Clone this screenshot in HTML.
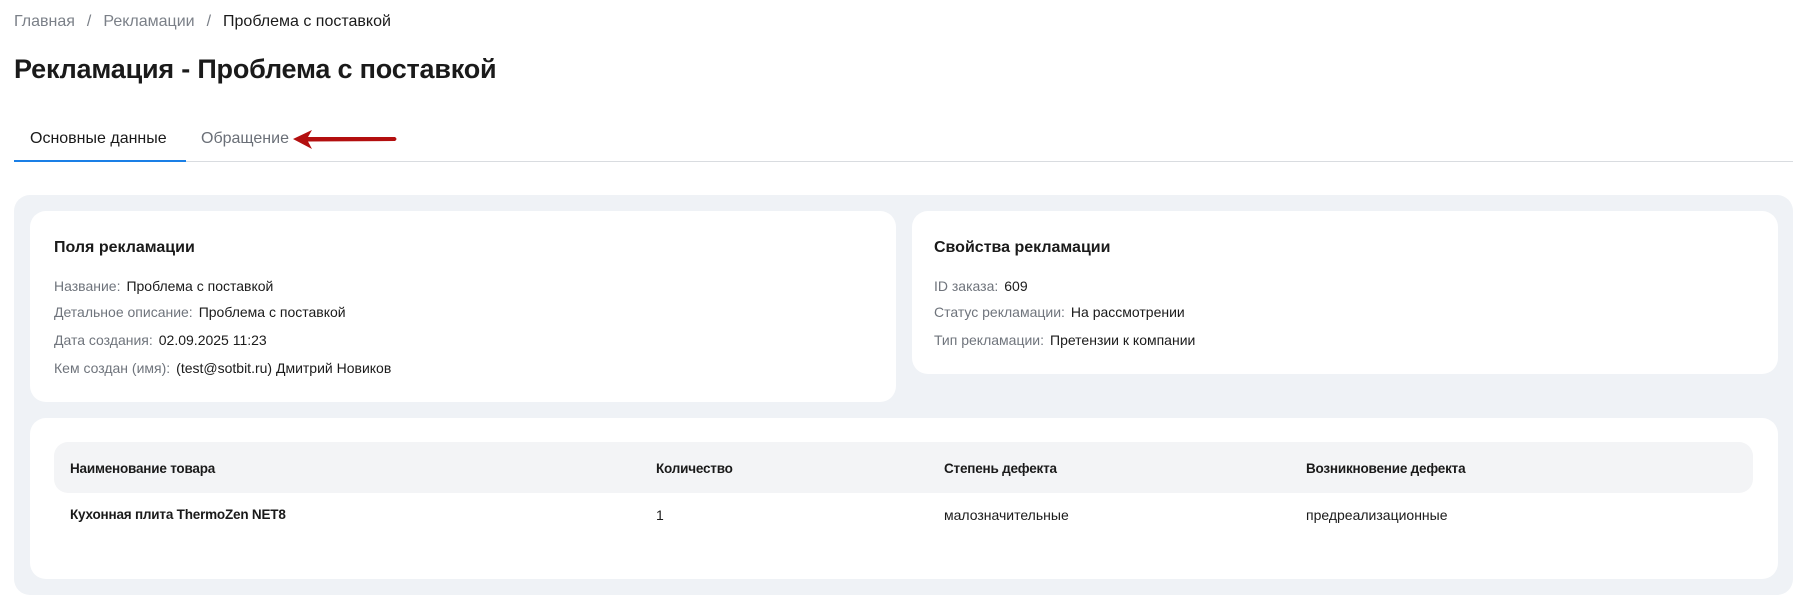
<!DOCTYPE html>
<html><head><meta charset="utf-8"><style>
*{margin:0;padding:0;box-sizing:border-box}
body{width:1806px;height:604px;background:#fff;font-family:"Liberation Sans",sans-serif;color:#1a1a1a;position:relative;overflow:hidden}
.a{position:absolute;white-space:nowrap}
.g{color:#7b8088}
.card{position:absolute;background:#fff;border-radius:16px}
.row{font-size:14px;line-height:16px}
.row span{color:#6f747c;margin-right:6px}
.th{font-size:13.5px;font-weight:bold;letter-spacing:-0.2px}
.td{font-size:14px}
</style></head><body>
<div class="a" style="left:14px;top:13px;font-size:16px;line-height:18px"><span class="g">Главная</span><span class="g" style="margin:0 12px">/</span><span class="g">Рекламации</span><span class="g" style="margin:0 12px">/</span><span>Проблема с поставкой</span></div>
<div class="a" style="left:14px;top:53px;font-size:27px;font-weight:bold;line-height:32px;letter-spacing:-0.2px">Рекламация - Проблема с поставкой</div>
<div class="a" style="left:30px;top:130px;font-size:16px;line-height:18px">Основные данные</div>
<div class="a g" style="left:201px;top:130px;font-size:16px;line-height:18px;color:#6a6f77">Обращение</div>
<svg class="a" style="left:290px;top:128px" width="110" height="24" viewBox="0 0 110 24"><path d="M3 11 L22 2 L18 9 L105 9 Q108 11 105 13 L18 13.5 L22 21 Z" fill="#b30f0f"/></svg>
<div class="a" style="left:14px;top:161px;width:1779px;height:1px;background:#d9dce0"></div>
<div class="a" style="left:14px;top:160px;width:172px;height:2px;background:#1a7fe6"></div>
<div class="a" style="left:14px;top:195px;width:1779px;height:400px;background:#eff2f6;border-radius:16px"></div>
<div class="card" style="left:30px;top:211px;width:866px;height:191px"></div>
<div class="card" style="left:912px;top:211px;width:866px;height:163px"></div>
<div class="card" style="left:30px;top:418px;width:1748px;height:161px"></div>
<div class="a" style="left:54px;top:239px;font-size:16px;font-weight:bold;line-height:18px">Поля рекламации</div>
<div class="a row" style="left:54px;top:278px"><span>Название:</span>Проблема с поставкой</div>
<div class="a row" style="left:54px;top:304px"><span>Детальное описание:</span>Проблема с поставкой</div>
<div class="a row" style="left:54px;top:332px"><span>Дата создания:</span>02.09.2025 11:23</div>
<div class="a row" style="left:54px;top:360px"><span>Кем создан (имя):</span>(test@sotbit.ru) Дмитрий Новиков</div>
<div class="a" style="left:934px;top:239px;font-size:16px;font-weight:bold;line-height:18px">Свойства рекламации</div>
<div class="a row" style="left:934px;top:278px"><span>ID заказа:</span>609</div>
<div class="a row" style="left:934px;top:304px"><span>Статус рекламации:</span>На рассмотрении</div>
<div class="a row" style="left:934px;top:332px"><span>Тип рекламации:</span>Претензии к компании</div>
<div class="a" style="left:54px;top:442px;width:1699px;height:51px;background:#f3f4f6;border-radius:14px"></div>
<div class="a th" style="left:70px;top:461px">Наименование товара</div>
<div class="a th" style="left:656px;top:461px">Количество</div>
<div class="a th" style="left:944px;top:461px">Степень дефекта</div>
<div class="a th" style="left:1306px;top:461px">Возникновение дефекта</div>
<div class="a th" style="left:70px;top:507px">Кухонная плита ThermoZen NET8</div>
<div class="a td" style="left:656px;top:507px">1</div>
<div class="a td" style="left:944px;top:507px">малозначительные</div>
<div class="a td" style="left:1306px;top:507px">предреализационные</div>
</body></html>
